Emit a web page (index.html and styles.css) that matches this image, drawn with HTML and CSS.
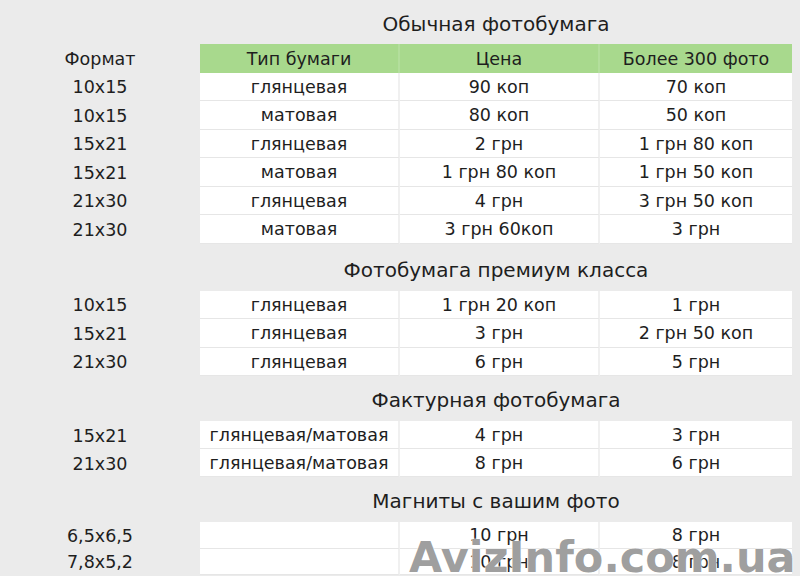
FILE: index.html
```html
<!DOCTYPE html>
<html lang="ru">
<head>
<meta charset="utf-8">
<title>Цены на фотобумагу</title>
<link rel="stylesheet" href="styles.css">
</head>
<body>
<div class="page">
  <section class="sec sec1">
    <div class="title t1"><div class="side"></div><h2>Обычная фотобумага</h2></div>
    <div class="row head"><div class="fmt">Формат</div><div class="cell">Тип бумаги</div><div class="cell">Цена</div><div class="cell">Более 300 фото</div></div>
    <div class="row"><div class="fmt">10x15</div><div class="cell">глянцевая</div><div class="cell">90 коп</div><div class="cell">70 коп</div></div>
    <div class="row"><div class="fmt">10x15</div><div class="cell">матовая</div><div class="cell">80 коп</div><div class="cell">50 коп</div></div>
    <div class="row"><div class="fmt">15x21</div><div class="cell">глянцевая</div><div class="cell">2 грн</div><div class="cell">1 грн 80 коп</div></div>
    <div class="row"><div class="fmt">15x21</div><div class="cell">матовая</div><div class="cell">1 грн 80 коп</div><div class="cell">1 грн 50 коп</div></div>
    <div class="row"><div class="fmt">21x30</div><div class="cell">глянцевая</div><div class="cell">4 грн</div><div class="cell">3 грн 50 коп</div></div>
    <div class="row"><div class="fmt">21x30</div><div class="cell">матовая</div><div class="cell">3 грн 60коп</div><div class="cell">3 грн</div></div>
  </section>
  <section class="sec sec2">
    <div class="title t2"><div class="side"></div><h2>Фотобумага премиум класса</h2></div>
    <div class="row"><div class="fmt">10x15</div><div class="cell">глянцевая</div><div class="cell">1 грн 20 коп</div><div class="cell">1 грн</div></div>
    <div class="row"><div class="fmt">15x21</div><div class="cell">глянцевая</div><div class="cell">3 грн</div><div class="cell">2 грн 50 коп</div></div>
    <div class="row"><div class="fmt">21x30</div><div class="cell">глянцевая</div><div class="cell">6 грн</div><div class="cell">5 грн</div></div>
  </section>
  <section class="sec sec3">
    <div class="title t3"><div class="side"></div><h2>Фактурная фотобумага</h2></div>
    <div class="row r28"><div class="fmt">15x21</div><div class="cell">глянцевая/матовая</div><div class="cell">4 грн</div><div class="cell">3 грн</div></div>
    <div class="row r28"><div class="fmt">21x30</div><div class="cell">глянцевая/матовая</div><div class="cell">8 грн</div><div class="cell">6 грн</div></div>
  </section>
  <section class="sec sec4">
    <div class="title t3"><div class="side"></div><h2>Магниты с вашим фото</h2></div>
    <div class="row r26"><div class="fmt">6,5x6,5</div><div class="cell"></div><div class="cell">10 грн</div><div class="cell">8 грн</div></div>
    <div class="row r26"><div class="fmt">7,8x5,2</div><div class="cell"></div><div class="cell">10 грн</div><div class="cell">8 грн</div></div>
  </section>
  <div class="watermark">AvizInfo.com.ua</div>
</div>
</body>
</html>
```

FILE: styles.css
```css
html, body {
  margin: 0;
  padding: 0;
}
body {
  background: #ebebeb;
  font-family: "DejaVu Sans", "Liberation Sans", sans-serif;
  color: #1e1e1e;
}
.page {
  position: relative;
  width: 800px;
  height: 576px;
  overflow: hidden;
}
.title {
  display: grid;
  grid-template-columns: 200px 592px;
  height: 44px;
  align-items: center;
}
.title h2 {
  margin: 0;
  font-size: 20px;
  font-weight: normal;
  text-align: center;
  padding-top: 2px;
}
.t1 h2 { padding-top: 4px; }
.t2 { height: 47px; }
.t2 h2 { padding-top: 5px; }
.t3 { height: 45px; }
.row {
  display: grid;
  grid-template-columns: 200px 200px 200px 192px;
  height: 28.5px;
  font-size: 17.5px;
}
.r28 { height: 28px; }
.r26 { height: 26.5px; }
.fmt, .cell {
  display: flex;
  align-items: center;
  justify-content: center;
  white-space: nowrap;
  padding-top: 1px;
}
.cell {
  background: #fff;
  border-bottom: 1px solid #e6e6e6;
  border-right: 2px solid #f0f0f0;
}
.cell:last-child {
  border-right: none;
}
.head .cell {
  background: #a8d98d;
  border-bottom: none;
  border-right-color: #b3de9c;
}
.watermark {
  position: absolute;
  left: 409px;
  top: 532px;
  font-family: "DejaVu Sans", sans-serif;
  font-weight: bold;
  font-size: 43px;
  color: rgba(110, 110, 110, 0.68);
  text-shadow: 0 0 2px #fff, 0 0 1px #fff;
  white-space: nowrap;
}
```
